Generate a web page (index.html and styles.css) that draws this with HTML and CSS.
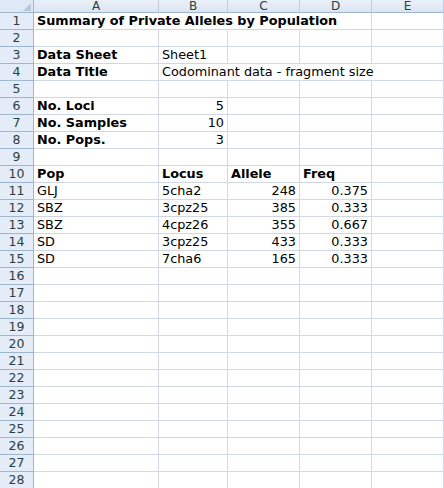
FILE: index.html
```html
<!DOCTYPE html>
<html>
<head>
<meta charset="utf-8">
<link rel="stylesheet" href="styles.css">
</head>
<body>
<div class="sheet">
  <div class="corner"><span class="tri"></span></div>
  <div class="ch">A</div><div class="ch">B</div><div class="ch">C</div><div class="ch">D</div><div class="ch">E</div>

  <div class="rh">1</div><div class="c span4 b">Summary of Private Alleles by Population</div><div class="c"></div>
  <div class="rh">2</div><div class="c"></div><div class="c"></div><div class="c"></div><div class="c"></div><div class="c"></div>
  <div class="rh">3</div><div class="c b">Data Sheet</div><div class="c">Sheet1</div><div class="c"></div><div class="c"></div><div class="c"></div>
  <div class="rh">4</div><div class="c b">Data Title</div><div class="c span4">Codominant data - fragment size</div>
  <div class="rh">5</div><div class="c"></div><div class="c"></div><div class="c"></div><div class="c"></div><div class="c"></div>
  <div class="rh">6</div><div class="c b">No. Loci</div><div class="c r">5</div><div class="c"></div><div class="c"></div><div class="c"></div>
  <div class="rh">7</div><div class="c b">No. Samples</div><div class="c r">10</div><div class="c"></div><div class="c"></div><div class="c"></div>
  <div class="rh">8</div><div class="c b">No. Pops.</div><div class="c r">3</div><div class="c"></div><div class="c"></div><div class="c"></div>
  <div class="rh">9</div><div class="c"></div><div class="c"></div><div class="c"></div><div class="c"></div><div class="c"></div>
  <div class="rh">10</div><div class="c b">Pop</div><div class="c b">Locus</div><div class="c b">Allele</div><div class="c b">Freq</div><div class="c"></div>
  <div class="rh">11</div><div class="c">GLJ</div><div class="c">5cha2</div><div class="c r">248</div><div class="c r">0.375</div><div class="c"></div>
  <div class="rh">12</div><div class="c">SBZ</div><div class="c">3cpz25</div><div class="c r">385</div><div class="c r">0.333</div><div class="c"></div>
  <div class="rh">13</div><div class="c">SBZ</div><div class="c">4cpz26</div><div class="c r">355</div><div class="c r">0.667</div><div class="c"></div>
  <div class="rh">14</div><div class="c">SD</div><div class="c">3cpz25</div><div class="c r">433</div><div class="c r">0.333</div><div class="c"></div>
  <div class="rh">15</div><div class="c">SD</div><div class="c">7cha6</div><div class="c r">165</div><div class="c r">0.333</div><div class="c"></div>
  <div class="rh">16</div><div class="c"></div><div class="c"></div><div class="c"></div><div class="c"></div><div class="c"></div>
  <div class="rh">17</div><div class="c"></div><div class="c"></div><div class="c"></div><div class="c"></div><div class="c"></div>
  <div class="rh">18</div><div class="c"></div><div class="c"></div><div class="c"></div><div class="c"></div><div class="c"></div>
  <div class="rh">19</div><div class="c"></div><div class="c"></div><div class="c"></div><div class="c"></div><div class="c"></div>
  <div class="rh">20</div><div class="c"></div><div class="c"></div><div class="c"></div><div class="c"></div><div class="c"></div>
  <div class="rh">21</div><div class="c"></div><div class="c"></div><div class="c"></div><div class="c"></div><div class="c"></div>
  <div class="rh">22</div><div class="c"></div><div class="c"></div><div class="c"></div><div class="c"></div><div class="c"></div>
  <div class="rh">23</div><div class="c"></div><div class="c"></div><div class="c"></div><div class="c"></div><div class="c"></div>
  <div class="rh">24</div><div class="c"></div><div class="c"></div><div class="c"></div><div class="c"></div><div class="c"></div>
  <div class="rh">25</div><div class="c"></div><div class="c"></div><div class="c"></div><div class="c"></div><div class="c"></div>
  <div class="rh">26</div><div class="c"></div><div class="c"></div><div class="c"></div><div class="c"></div><div class="c"></div>
  <div class="rh">27</div><div class="c"></div><div class="c"></div><div class="c"></div><div class="c"></div><div class="c"></div>
  <div class="rh">28</div><div class="c"></div><div class="c"></div><div class="c"></div><div class="c"></div><div class="c"></div>
</div>
</body>
</html>
```
FILE: styles.css
```css
html, body {
  margin: 0;
  padding: 0;
  background: #ffffff;
}
.sheet {
  display: grid;
  grid-template-columns: 34px 125px 69px 72px 72px 72px;
  grid-template-rows: 13px repeat(28, 17px);
  width: 444px;
  font-family: "DejaVu Sans", Verdana, sans-serif;
  font-size: 12.8px;
  color: #000;
}
.corner {
  background: #dfe8f5;
  border-right: 1px solid #9eb6ce;
  border-bottom: 1px solid #9eb6ce;
  position: relative;
}
.tri {
  position: absolute;
  right: 2px;
  bottom: 1px;
  width: 0;
  height: 0;
  border-left: 8px solid transparent;
  border-bottom: 8px solid #b8c8da;
}
.ch {
  background: linear-gradient(#eaf0f8, #dbe5f3);
  border-right: 1px solid #c0cedf;
  border-bottom: 1px solid #9eb6ce;
  color: #27413e;
  font-size: 12px;
  line-height: 12px;
  text-align: center;
  overflow: hidden;
}
.rh {
  background: #e4ecf7;
  border-right: 1px solid #9eb6ce;
  border-bottom: 1px solid #9eb6ce;
  color: #27413e;
  font-size: 12.5px;
  line-height: 16px;
  text-align: center;
}
.c {
  border-right: 1px solid #d0d7e5;
  border-bottom: 1px solid #d0d7e5;
  line-height: 16px;
  padding: 0 3px;
  white-space: nowrap;
  overflow: hidden;
}
.b { font-weight: bold; }
.r { text-align: right; }
.span4 { grid-column: span 4; }
```
